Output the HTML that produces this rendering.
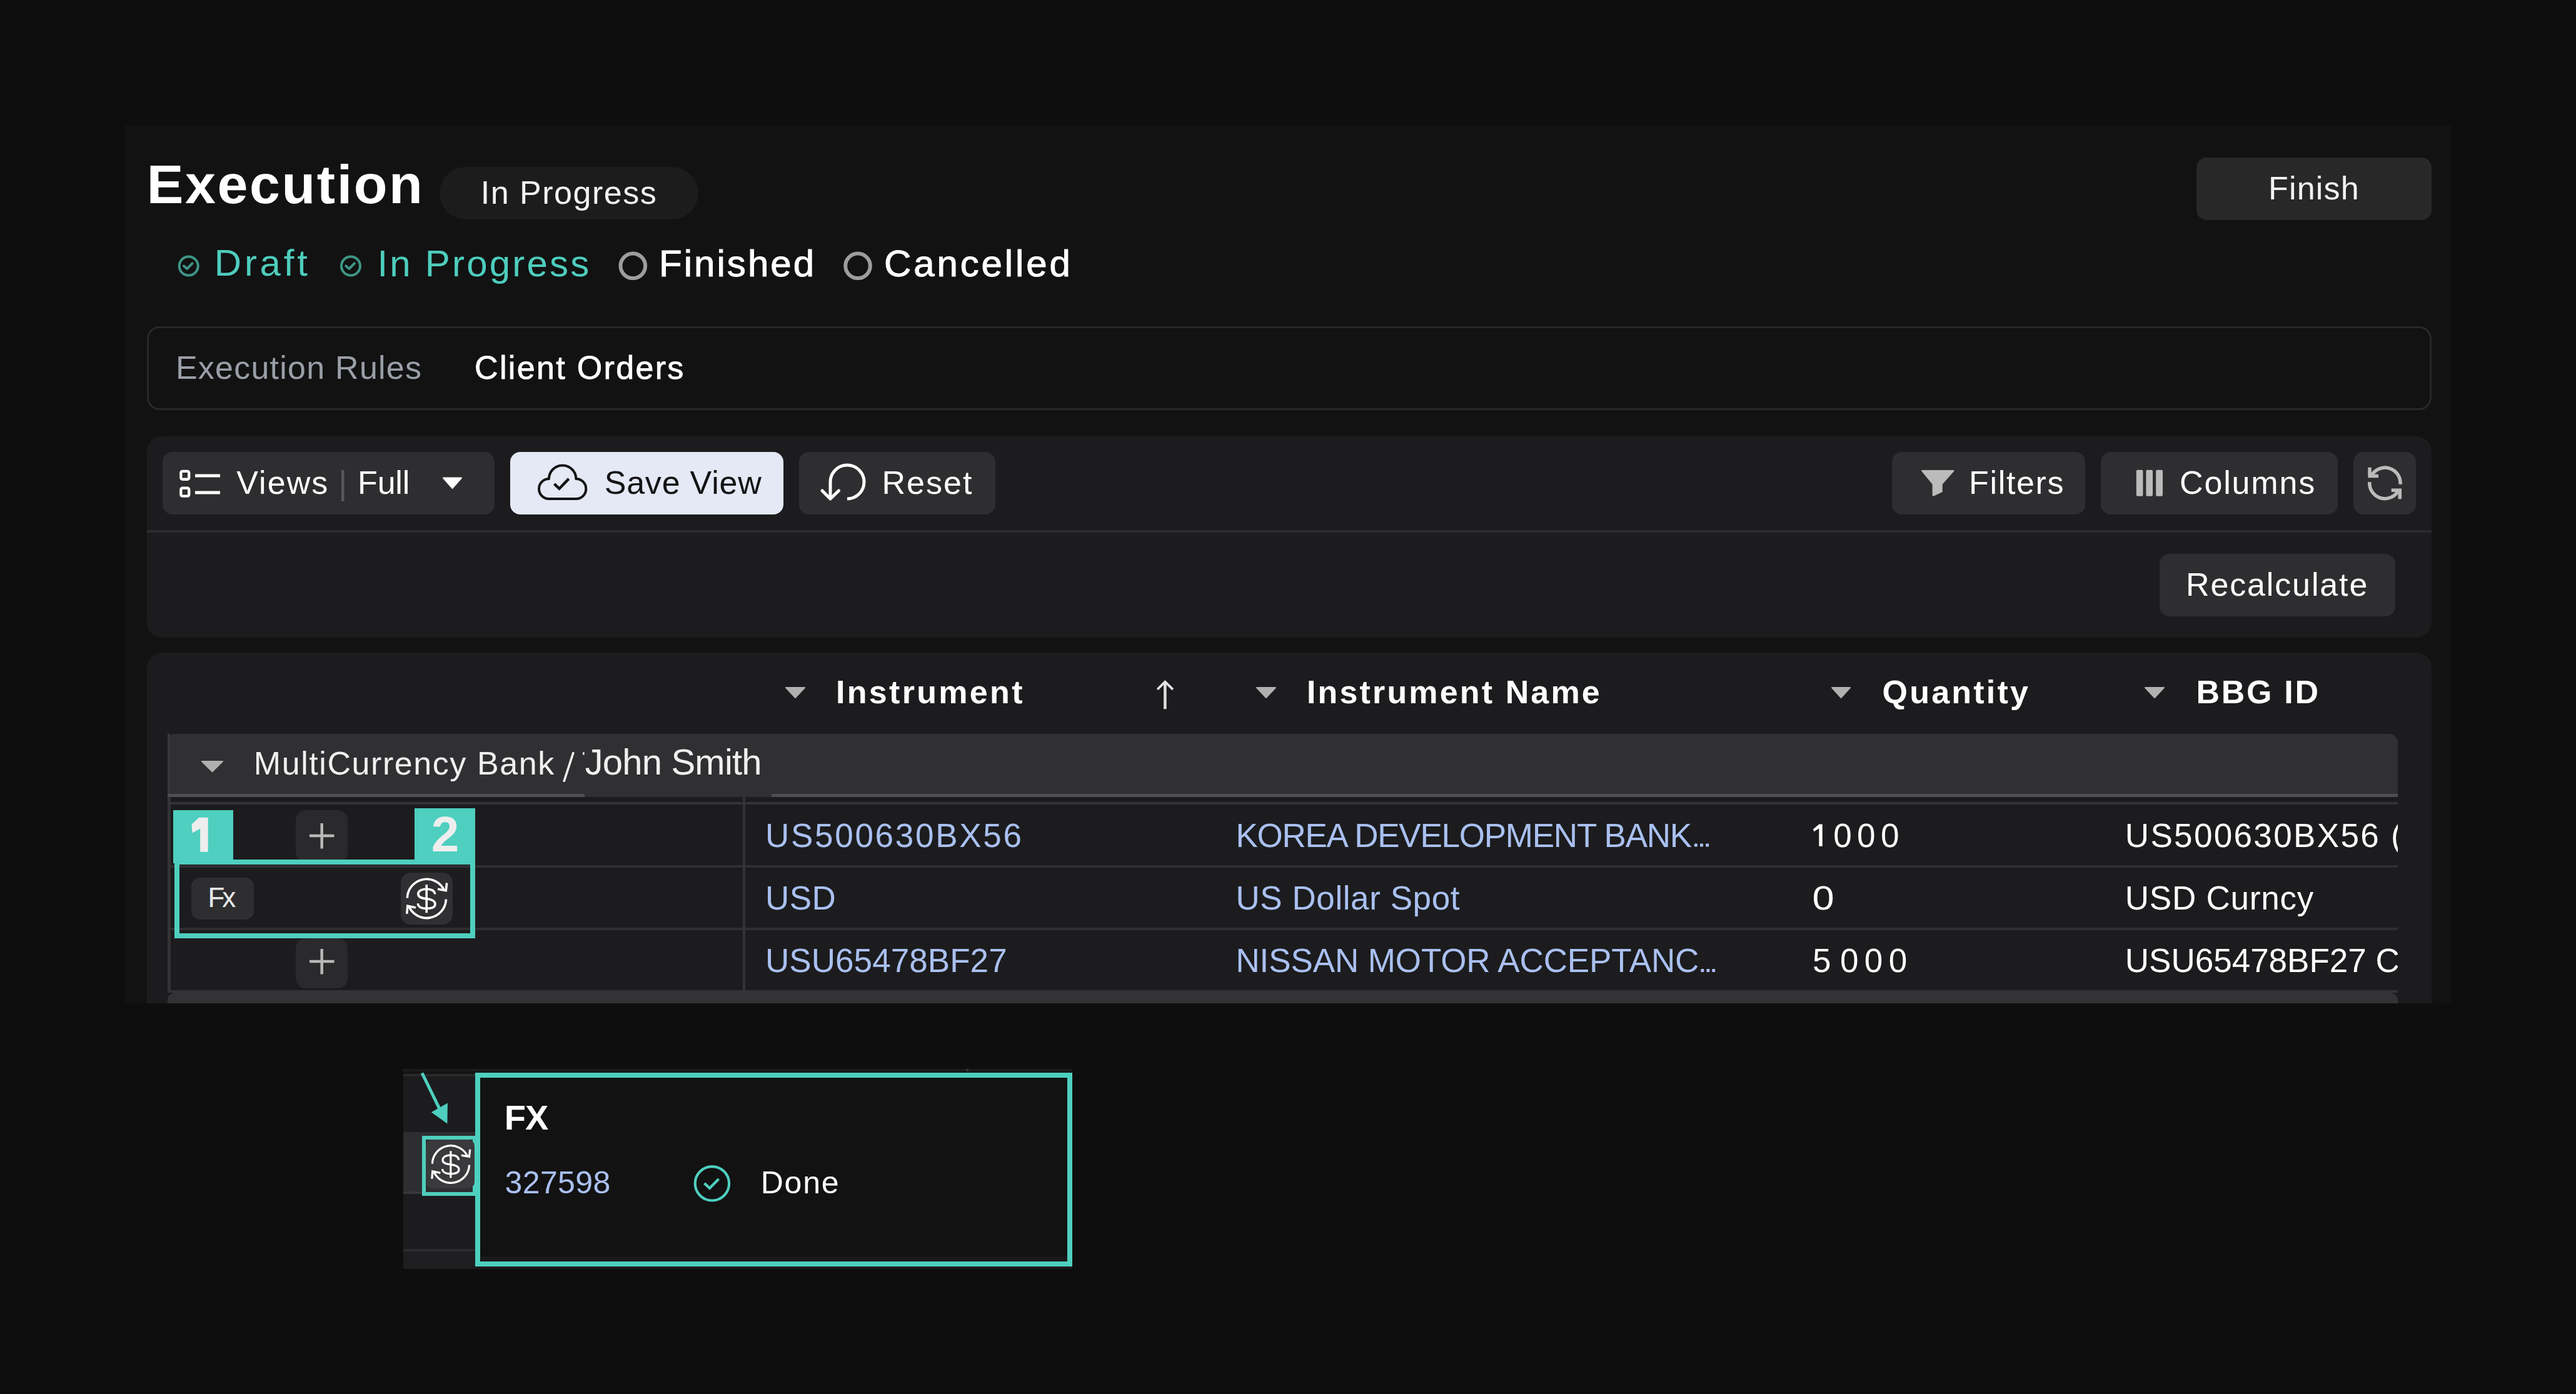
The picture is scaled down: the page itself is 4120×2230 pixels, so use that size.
<!DOCTYPE html>
<html>
<head>
<meta charset="utf-8">
<style>
html,body{margin:0;padding:0;}
body{width:4120px;height:2230px;background:#0e0e0e;position:relative;overflow:hidden;font-family:"Liberation Sans", sans-serif;}
.a{position:absolute;box-sizing:border-box;}
.t{position:absolute;white-space:pre;line-height:1;font-family:"Liberation Sans", sans-serif;}
svg{position:absolute;overflow:visible;}
</style>
</head>
<body>
<!-- main panel -->
<div class="a" style="left:200px;top:200px;width:3720px;height:1405px;background:#121212;"></div>

<!-- title pill -->
<div class="a" style="left:703px;top:267px;width:414px;height:84px;border-radius:42px;background:#1c1c1c;"></div>
<!-- finish button -->
<div class="a" style="left:3513px;top:252px;width:376px;height:100px;border-radius:16px;background:#282828;"></div>

<!-- status icons -->
<svg style="left:0;top:0" width="4120" height="500">
  <circle cx="301.7" cy="425.5" r="15" fill="none" stroke="#3e9686" stroke-width="4"/>
  <path d="M294 425.4 L299.3 429.9 L307.5 421.3" fill="none" stroke="#3e9686" stroke-width="4" stroke-linecap="round" stroke-linejoin="round"/>
  <circle cx="561" cy="425.5" r="15" fill="none" stroke="#3e9686" stroke-width="4"/>
  <path d="M553.3 425.4 L558.6 429.9 L566.8 421.3" fill="none" stroke="#3e9686" stroke-width="4" stroke-linecap="round" stroke-linejoin="round"/>
  <circle cx="1012.3" cy="425.3" r="19.8" fill="none" stroke="#9d9d9d" stroke-width="6"/>
  <circle cx="1372" cy="425.3" r="19.8" fill="none" stroke="#9d9d9d" stroke-width="6"/>
</svg>

<!-- tabs container -->
<div class="a" style="left:235px;top:522px;width:3654px;height:134px;border:3px solid #282828;border-radius:20px;"></div>

<!-- toolbar container -->
<div class="a" style="left:235px;top:698px;width:3654px;height:322px;border-radius:24px;background:#1c1c1e;"></div>
<div class="a" style="left:235px;top:848px;width:3654px;height:4px;background:#2b2b2e;"></div>

<!-- views button -->
<div class="a" style="left:260px;top:723px;width:531px;height:100px;border-radius:16px;background:#2e2e30;"></div>
<svg style="left:0;top:0" width="1000" height="1000">
  <rect x="289.35" y="753.85" width="12.9" height="12.9" rx="2.5" fill="none" stroke="#fff" stroke-width="4.3"/>
  <rect x="289.35" y="780.75" width="12.9" height="12.9" rx="2.5" fill="none" stroke="#fff" stroke-width="4.3"/>
  <line x1="312" y1="761" x2="352" y2="761" stroke="#fff" stroke-width="5"/>
  <line x1="312" y1="788" x2="352" y2="788" stroke="#fff" stroke-width="5"/>
  <rect x="546" y="752" width="4.5" height="50" fill="#58585c"/>
  <path d="M709 764.5 L738 764.5 L723.5 781 Z" fill="#fff" stroke="#fff" stroke-width="2" stroke-linejoin="round"/>
</svg>

<!-- save view -->
<div class="a" style="left:816px;top:723px;width:437px;height:100px;border-radius:16px;background:#e4e9f5;"></div>
<svg style="left:0;top:0" width="1000" height="1000">
  <path d="M878 798 A16 16 0 0 1 878 766 A21.6 21.6 0 0 1 921.3 766 A16 16 0 0 1 921.3 798 Z" fill="none" stroke="#141414" stroke-width="4" stroke-linejoin="round"/>
  <path d="M886.5 774.2 L894.5 781.7 L909.7 765.9" fill="none" stroke="#141414" stroke-width="4.5" stroke-linecap="butt" stroke-linejoin="miter"/>
</svg>

<!-- reset -->
<div class="a" style="left:1278px;top:723px;width:314px;height:100px;border-radius:16px;background:#2e2e30;"></div>
<svg style="left:0;top:0" width="2000" height="1000">
  <path d="M1355 798 A27 27 0 1 0 1328 771 L1328 797" fill="none" stroke="#fff" stroke-width="5"/>
  <path d="M1315 785 L1328 798 L1341.5 785" fill="none" stroke="#fff" stroke-width="5" stroke-linecap="round" stroke-linejoin="round"/>
</svg>

<!-- filters -->
<div class="a" style="left:3026px;top:723px;width:309px;height:100px;border-radius:16px;background:#2e2e30;"></div>
<svg style="left:0;top:0" width="4120" height="1000">
  <path d="M3074 752 L3124.5 752 Q3126 752 3125 754 L3106.7 774.7 L3106.7 787 L3093 793.5 L3090.6 793.5 L3090.6 774.7 L3073.5 754 Q3072.5 752 3074 752 Z" fill="#bbbbbb"/>
</svg>
<!-- columns -->
<div class="a" style="left:3360px;top:723px;width:379px;height:100px;border-radius:16px;background:#2e2e30;"></div>
<svg style="left:0;top:0" width="4120" height="1000">
  <rect x="3416.8" y="751.8" width="10.6" height="42" rx="2" fill="#bbbbbb"/>
  <rect x="3432.4" y="751.8" width="10.6" height="42" rx="2" fill="#bbbbbb"/>
  <rect x="3448.2" y="751.8" width="10.8" height="42" rx="2" fill="#bbbbbb"/>
</svg>
<!-- refresh -->
<div class="a" style="left:3764px;top:723px;width:100px;height:100px;border-radius:16px;background:#2e2e30;"></div>
<svg style="left:0;top:0" width="4120" height="1000">
  <g fill="none" stroke="#bbbbbb" stroke-width="5.5">
  <path d="M3792.5 761.7 A24.6 24.6 0 0 1 3839.0 774.8"/>
  <path d="M3789.9 770.9 A24.6 24.6 0 0 0 3836.4 784.1"/>
  <path d="M3790 747.7 L3790 761.5 L3804 761.5"/>
  <path d="M3824.7 784.2 L3838.3 784.2 L3838.3 798.3"/>
  </g>
</svg>

<!-- recalculate -->
<div class="a" style="left:3454px;top:886px;width:377px;height:100px;border-radius:16px;background:#2e2e30;"></div>

<!-- table container -->
<div class="a" style="left:235px;top:1044px;width:3654px;height:561px;border-radius:24px 24px 0 0;background:#1c1c1e;"></div>
<svg style="left:0;top:0" width="4120" height="1200">
  <path d="M1257 1100 L1287 1100 L1272 1116 Z" fill="#b0b0b0" stroke="#b0b0b0" stroke-width="2" stroke-linejoin="round"/>
  <path d="M2010 1100 L2040 1100 L2025 1116 Z" fill="#b0b0b0" stroke="#b0b0b0" stroke-width="2" stroke-linejoin="round"/>
  <path d="M2930 1100 L2959 1100 L2944.5 1116 Z" fill="#b0b0b0" stroke="#b0b0b0" stroke-width="2" stroke-linejoin="round"/>
  <path d="M3431 1100 L3461 1100 L3446 1116 Z" fill="#b0b0b0" stroke="#b0b0b0" stroke-width="2" stroke-linejoin="round"/>
  <path d="M1863.4 1134.3 L1863.4 1092" fill="none" stroke="#dddddd" stroke-width="4.6"/><path d="M1852.5 1101.5 L1863.4 1090.6 L1874.5 1101.5" fill="none" stroke="#e6e6e6" stroke-width="3.8" stroke-linecap="square"/>
</svg>

<!-- group row -->
<div class="a" style="left:268px;top:1174px;width:3567px;height:101px;border-radius:12px 14px 0 0;background:#303033;"></div>
<div class="a" style="left:268px;top:1174px;width:4px;height:101px;background:#38383b;"></div>
<div class="a" style="left:268px;top:1270px;width:667px;height:5px;background:#4f4f55;"></div>
<div class="a" style="left:1234px;top:1270px;width:2601px;height:5px;background:#4f4f55;"></div>
<svg style="left:0;top:0" width="1000" height="1300">
  <path d="M323 1218 L356 1218 L339.5 1234.4 Z" fill="#b0b0b0" stroke="#b0b0b0" stroke-width="2" stroke-linejoin="round"/>
  <path d="M901.8 1250.8 L917.2 1203.3" stroke="#f0f0f0" stroke-width="3.6"/>
  <rect x="932" y="1203.3" width="2.7" height="4.2" fill="#e8e8e8"/>
</svg>

<!-- rows -->
<div class="a" style="left:268px;top:1283px;width:3567px;height:4px;background:#333336;"></div>
<div class="a" style="left:268px;top:1384px;width:3567px;height:4px;background:#2f2f32;"></div>
<div class="a" style="left:268px;top:1484px;width:3567px;height:4px;background:#2f2f32;"></div>
<div class="a" style="left:268px;top:1275px;width:4.5px;height:313px;background:#333336;"></div>
<div class="a" style="left:1188px;top:1275px;width:4.4px;height:309px;background:#333336;"></div>
<div class="a" style="left:268px;top:1584px;width:3567px;height:4px;background:#333336;"></div>
<div class="a" style="left:268px;top:1588px;width:3567px;height:17px;border-radius:12px 12px 0 0;background:#333336;"></div>

<svg style="left:0;top:0" width="4120" height="1700" fill="#a9c0f0">
  <rect x="2709.8" y="1349.5" width="5" height="5" rx="1"/><rect x="2719" y="1349.5" width="5" height="5" rx="1"/><rect x="2728.1" y="1349.5" width="5" height="5" rx="1"/>
  <rect x="2720.3" y="1550" width="5" height="5" rx="1"/><rect x="2729.4" y="1550" width="5" height="5" rx="1"/><rect x="2738.2" y="1550" width="5" height="5" rx="1"/>
</svg>
<svg style="left:0;top:0" width="4120" height="1700"><path d="M2909.5 1318.6 L2914.7 1318.6 L2914.7 1353.7 L2909.3 1353.7 L2909.3 1325.2 L2901.3 1330.3 L2899.9 1326.5 Z" fill="#ffffff"/></svg>
<!-- plus buttons -->
<div class="a" style="left:473px;top:1296px;width:83px;height:83px;border-radius:16px;background:#2a2a2c;"></div>
<div class="a" style="left:473px;top:1501px;width:83px;height:80px;border-radius:16px;background:#2a2a2c;"></div>
<svg style="left:0;top:0" width="1000" height="1700">
  <path d="M495 1337 L534.5 1337 M514.7 1317 L514.7 1357.4" stroke="#b8b8b8" stroke-width="4.5"/>
  <path d="M495 1538 L534.5 1538 M514.7 1518 L514.7 1558.4" stroke="#b8b8b8" stroke-width="4.5"/>
</svg>

<!-- teal badges + frame -->
<div class="a" style="left:277px;top:1295.6px;width:96px;height:85px;background:#4ecfbf;"></div>
<div class="a" style="left:663px;top:1293px;width:97px;height:90px;background:#4ecfbf;"></div>
<div class="a" style="left:278.5px;top:1374.7px;width:481.2px;height:126.8px;border:8.8px solid #4ecfbf;"></div>

<svg style="left:0;top:0" width="1000" height="1700"><path d="M318.5 1307.8 L332.7 1307.8 L332.7 1362.8 L320.2 1362.8 L320.2 1325.5 L307.5 1332.5 L306.6 1318.5 Z" fill="#eeeeee"/></svg>
<!-- Fx chip -->
<div class="a" style="left:306px;top:1404.4px;width:100px;height:67px;border-radius:14px;background:#2e2e30;"></div>
<!-- dollar button -->
<div class="a" style="left:641px;top:1396px;width:83px;height:83px;border-radius:16px;background:#303033;"></div>
<svg style="left:0;top:0" width="1000" height="1700">
  <g fill="none" stroke="#ffffff" stroke-width="3.6">
    <path d="M651.4 1436.5 A31 31 0 0 1 710.5 1424.2"/>
    <path d="M700 1422.3 L713.3 1424.6 L714.6 1412.5"/>
    <path d="M713.4 1438.6 A31 31 0 0 1 653.6 1449"/>
    <path d="M665 1452 L651.8 1449.2 L650.8 1461.8"/>
    <path d="M682.2 1415.2 L682.2 1460.2"/>
    <path d="M695.6 1430.5 C695.3 1425 690 1422.2 682 1422.2 C673.5 1422.2 668.8 1425.8 668.8 1430.3 C668.8 1435.3 674 1436.8 682 1437.8 C690.5 1438.8 696 1441 696 1446.3 C696 1451 690.5 1453.4 682 1453.4 C673.5 1453.4 668.5 1450.3 668.3 1445.3"/>
  </g>
</svg>

<!-- popup -->
<div class="a" style="left:645px;top:1710px;width:1070px;height:320px;background:#141415;"></div>
<div class="a" style="left:645px;top:1710px;width:1070px;height:4px;background:#1b1b1d;"></div>
<div class="a" style="left:645px;top:2026px;width:1070px;height:4px;background:#1a1a1c;"></div>
<div class="a" style="left:1545px;top:1710px;width:4px;height:4px;background:#333335;"></div>
<div class="a" style="left:645px;top:1722px;width:116px;height:89px;background:#1c1c1e;"></div>
<div class="a" style="left:645px;top:1717.5px;width:116px;height:4.5px;background:#2a2a2d;"></div>
<div class="a" style="left:645px;top:1811px;width:116px;height:95px;background:#2e2e30;"></div>
<div class="a" style="left:645px;top:1906px;width:116px;height:4px;background:#38383b;"></div>
<div class="a" style="left:645px;top:1910px;width:116px;height:88px;background:#1c1c1e;"></div>
<div class="a" style="left:645px;top:1998px;width:116px;height:4px;background:#2d2d30;"></div>
<div class="a" style="left:645px;top:2002px;width:116px;height:28px;background:#1e1e20;"></div>

<div class="a" style="left:760px;top:1715.8px;width:954.8px;height:310.4px;border:8px solid #4ecfbf;background:#121212;"></div>
<div class="a" style="left:768.5px;top:2010px;width:938px;height:8px;background:#19191b;"></div>
<div class="a" style="left:674.6px;top:1816.6px;width:87px;height:96px;border:6.5px solid #4ecfbf;background:#2e2e30;"></div>
<div class="a" style="left:681px;top:1823px;width:77.5px;height:78px;border-radius:10px;background:#3a3a3d;"></div>
<svg style="left:0;top:0" width="1000" height="2100">
  <g fill="none" stroke="#ffffff" stroke-width="3.4" transform="translate(721 1862.5) scale(0.955) translate(-682.4 -1437.4)">
    <path d="M651.4 1436.5 A31 31 0 0 1 710.5 1424.2"/>
    <path d="M700 1422.3 L713.3 1424.6 L714.6 1412.5"/>
    <path d="M713.4 1438.6 A31 31 0 0 1 653.6 1449"/>
    <path d="M665 1452 L651.8 1449.2 L650.8 1461.8"/>
    <path d="M682.2 1415.2 L682.2 1460.2"/>
    <path d="M695.6 1430.5 C695.3 1425 690 1422.2 682 1422.2 C673.5 1422.2 668.8 1425.8 668.8 1430.3 C668.8 1435.3 674 1436.8 682 1437.8 C690.5 1438.8 696 1441 696 1446.3 C696 1451 690.5 1453.4 682 1453.4 C673.5 1453.4 668.5 1450.3 668.3 1445.3"/>
  </g>
  <path d="M675 1716.5 L707 1782" stroke="#4ecfbf" stroke-width="5"/>
  <path d="M715.4 1797.6 L689.8 1779.3 L715.9 1764.6 Z" fill="#4ecfbf"/>
  <circle cx="1138.9" cy="1893.3" r="27.2" fill="none" stroke="#4ecfbf" stroke-width="4.2"/>
  <path d="M1126.6 1892.9 L1135 1900.7 L1149.5 1886" fill="none" stroke="#4ecfbf" stroke-width="4.2"/>
</svg>

<div class="t" style="left:234.7px;top:250.9px;font-size:88px;font-weight:700;color:#ffffff;letter-spacing:2.56px;">Execution</div>
<div class="t" style="left:768.8px;top:281.9px;font-size:52px;font-weight:400;color:#f2f2f2;letter-spacing:1.50px;">In Progress</div>
<div class="t" style="left:3628.0px;top:275.0px;font-size:52px;font-weight:400;color:#f2f2f2;letter-spacing:1.20px;">Finish</div>
<div class="t" style="left:342.8px;top:391.4px;font-size:60px;font-weight:400;color:#4ecdbd;letter-spacing:4.75px;">Draft</div>
<div class="t" style="left:603.5px;top:391.5px;font-size:60px;font-weight:400;color:#4ecdbd;letter-spacing:3.20px;">In Progress</div>
<div class="t" style="left:1054.0px;top:391.7px;font-size:60px;font-weight:400;color:#ffffff;letter-spacing:3.04px;-webkit-text-stroke:1px #ffffff;">Finished</div>
<div class="t" style="left:1414.0px;top:392.2px;font-size:60px;font-weight:400;color:#ffffff;letter-spacing:3.88px;-webkit-text-stroke:1px #ffffff;">Cancelled</div>
<div class="t" style="left:280.9px;top:561.8px;font-size:52px;font-weight:400;color:#9a9ea8;letter-spacing:1.24px;">Execution Rules</div>
<div class="t" style="left:759.0px;top:562.0px;font-size:52px;font-weight:400;color:#ffffff;letter-spacing:2.33px;-webkit-text-stroke:0.8px #ffffff;">Client Orders</div>
<div class="t" style="left:378.2px;top:745.8px;font-size:52px;font-weight:400;color:#ffffff;letter-spacing:2.10px;">Views</div>
<div class="t" style="left:572.1px;top:745.8px;font-size:52px;font-weight:400;color:#ffffff;letter-spacing:-0.23px;">Full</div>
<div class="t" style="left:966.7px;top:745.5px;font-size:52px;font-weight:400;color:#141414;letter-spacing:0.79px;">Save View</div>
<div class="t" style="left:1410.5px;top:745.5px;font-size:52px;font-weight:400;color:#ffffff;letter-spacing:2.00px;">Reset</div>
<div class="t" style="left:3149.0px;top:745.5px;font-size:52px;font-weight:400;color:#ffffff;letter-spacing:1.67px;">Filters</div>
<div class="t" style="left:3486.0px;top:745.5px;font-size:52px;font-weight:400;color:#ffffff;letter-spacing:1.83px;">Columns</div>
<div class="t" style="left:3496.0px;top:908.5px;font-size:52px;font-weight:400;color:#ffffff;letter-spacing:1.86px;">Recalculate</div>
<div class="t" style="left:1337.0px;top:1081.0px;font-size:52px;font-weight:700;color:#ffffff;letter-spacing:3.31px;">Instrument</div>
<div class="t" style="left:2090.0px;top:1081.0px;font-size:52px;font-weight:700;color:#ffffff;letter-spacing:3.14px;">Instrument Name</div>
<div class="t" style="left:3010.5px;top:1081.0px;font-size:52px;font-weight:700;color:#ffffff;letter-spacing:3.21px;">Quantity</div>
<div class="t" style="left:3512.5px;top:1081.0px;font-size:52px;font-weight:700;color:#ffffff;letter-spacing:2.70px;">BBG ID</div>
<div class="t" style="left:405.8px;top:1195.0px;font-size:52px;font-weight:400;color:#f0f0f0;letter-spacing:1.57px;">MultiCurrency Bank</div>
<div class="t" style="left:935.6px;top:1189.9px;font-size:58px;font-weight:400;color:#f0f0f0;letter-spacing:-0.80px;">John Smith</div>
<div class="t" style="left:1224.0px;top:1310.1px;font-size:53px;font-weight:400;color:#a9c0f0;letter-spacing:2.71px;">US500630BX56</div>
<div class="t" style="left:1976.4px;top:1309.6px;font-size:53px;font-weight:400;color:#a9c0f0;letter-spacing:-1.25px;">KOREA DEVELOPMENT BANK</div>
<div class="t" style="left:2932.2px;top:1309.6px;font-size:53px;font-weight:400;color:#ffffff;letter-spacing:8.40px;">000</div>
<div class="t" style="left:3398.8px;top:1310.1px;font-size:53px;font-weight:400;color:#ffffff;letter-spacing:2.34px;width:436.2px;overflow:hidden;">US500630BX56 (</div>
<div class="t" style="left:1224.0px;top:1410.1px;font-size:53px;font-weight:400;color:#a9c0f0;letter-spacing:0.40px;">USD</div>
<div class="t" style="left:1976.4px;top:1410.1px;font-size:53px;font-weight:400;color:#a9c0f0;letter-spacing:0.58px;">US Dollar Spot</div>
<div class="t" style="left:2899.0px;top:1409.6px;font-size:53px;font-weight:400;color:#ffffff;letter-spacing:0.00px;transform:scaleX(1.19);transform-origin:2px 0;">0</div>
<div class="t" style="left:3398.8px;top:1410.1px;font-size:53px;font-weight:400;color:#ffffff;letter-spacing:0.76px;">USD Curncy</div>
<div class="t" style="left:1224.0px;top:1510.1px;font-size:53px;font-weight:400;color:#a9c0f0;letter-spacing:0.06px;">USU65478BF27</div>
<div class="t" style="left:1976.4px;top:1510.1px;font-size:53px;font-weight:400;color:#a9c0f0;letter-spacing:-0.10px;">NISSAN MOTOR ACCEPTANC</div>
<div class="t" style="left:2899.0px;top:1509.6px;font-size:53px;font-weight:400;color:#ffffff;letter-spacing:0.00px;">5</div>
<div class="t" style="left:2942.9px;top:1509.6px;font-size:53px;font-weight:400;color:#ffffff;letter-spacing:9.50px;">000</div>
<div class="t" style="left:3398.8px;top:1510.1px;font-size:53px;font-weight:400;color:#ffffff;letter-spacing:0.00px;width:436.2px;overflow:hidden;">USU65478BF27 C</div>
<div class="t" style="left:332.4px;top:1413.6px;font-size:44px;font-weight:400;color:#e8e8e8;letter-spacing:-4.00px;">Fx</div>
<div class="t" style="left:689.7px;top:1295.3px;font-size:80px;font-weight:700;color:#eeeeee;letter-spacing:0.00px;">2</div>
<div class="t" style="left:806.8px;top:1760.1px;font-size:56px;font-weight:700;color:#ffffff;letter-spacing:-1.00px;">FX</div>
<div class="t" style="left:807.5px;top:1867.4px;font-size:50px;font-weight:400;color:#a9c0f0;letter-spacing:0.40px;">327598</div>
<div class="t" style="left:1216.7px;top:1867.4px;font-size:50px;font-weight:400;color:#ffffff;letter-spacing:1.77px;">Done</div>
</body>
</html>
